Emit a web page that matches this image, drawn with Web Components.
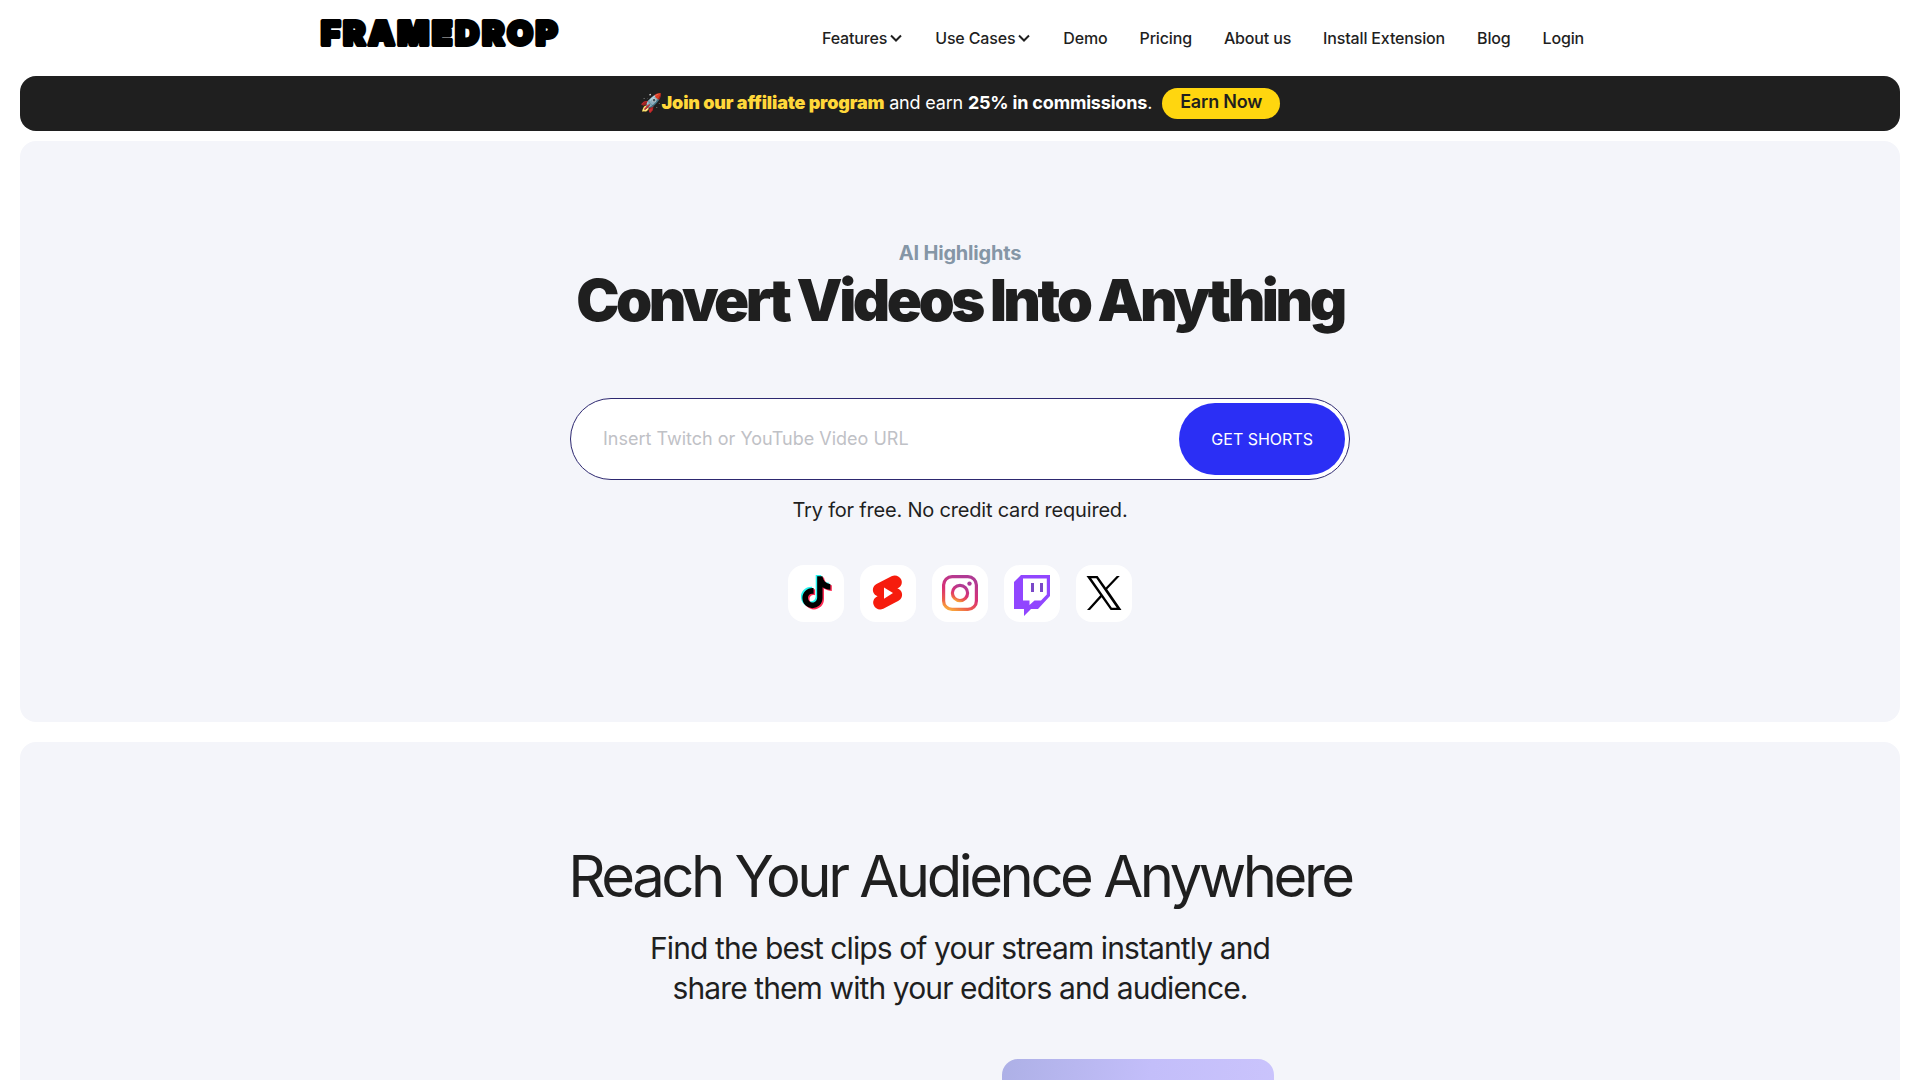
<!DOCTYPE html>
<html lang="en">
<head>
<meta charset="utf-8">
<title>Framedrop</title>
<meta name="viewport" content="width=device-width, initial-scale=1">
<style>
  body { margin: 0; background: #fff; color: #1f1f1f; font-family: Inter, "Liberation Sans", sans-serif; font-size: 16px; overflow-x: hidden; }
</style>
</head>
<body>
<fd-page></fd-page>
<script>
const define = (name, html) => {
  const template = document.createElement('template');
  template.innerHTML = html;
  customElements.define(name, class extends HTMLElement {
    constructor() {
      super();
      this.attachShadow({ mode: 'open' }).append(template.content.cloneNode(true));
    }
  });
};

define('fd-logo', `
<style>
  :host { display: block; }
  a, svg { display: block; }
  svg { overflow: visible; }
  text { font-size: 33px; font-weight: 900; letter-spacing: 3px; fill: #000; stroke: #000; stroke-width: 4px; stroke-linejoin: round; }
</style>
<a href="#"><svg width="250" height="42" viewBox="0 0 250 42"><text x="1" y="33">FRAMEDROP</text></svg></a>`);

define('fd-nav-link', `
<style>
  :host { display: block; }
  a { display: flex; align-items: center; gap: 2px; padding: 0 16px; color: inherit; text-decoration: none; font-weight: 500; line-height: 24px; letter-spacing: -.01em; }
  ::slotted(svg) { width: 14px; height: 14px; }
</style>
<a href="#"><slot></slot><slot name="icon"></slot></a>`);

define('fd-header', `
<style>
  :host { display: block; }
  header { display: flex; justify-content: space-between; align-items: center; max-width: 1280px; height: 76px; margin: 0 auto; }
  fd-logo { padding-bottom: 10px; }
  nav { display: flex; white-space: nowrap; }
  path { fill: none; stroke: #1f1f1f; stroke-width: 2; }
</style>
<header>
  <fd-logo></fd-logo>
  <nav aria-label="Main">
    <fd-nav-link>Features<svg slot="icon" viewBox="0 0 14 14"><path d="M2 4.500l5 5 5-5"/></svg></fd-nav-link>
    <fd-nav-link>Use Cases<svg slot="icon" viewBox="0 0 14 14"><path d="M2 4.500l5 5 5-5"/></svg></fd-nav-link>
    <fd-nav-link>Demo</fd-nav-link>
    <fd-nav-link>Pricing</fd-nav-link>
    <fd-nav-link>About us</fd-nav-link>
    <fd-nav-link>Install Extension</fd-nav-link>
    <fd-nav-link>Blog</fd-nav-link>
    <fd-nav-link>Login</fd-nav-link>
  </nav>
</header>`);

define('fd-banner', `
<style>
  :host { display: block; }
  aside { display: flex; align-items: center; justify-content: center; gap: 10px; height: 55px; border-radius: 16px; background: #1f1f1f; color: #fff; font-size: 18px; line-height: 27px; letter-spacing: -.01em; }
  p { margin: 0; padding-bottom: 2px; }
  b { color: #ffd83a; font-weight: 900; }
  strong { font-weight: 700; }
  a { display: block; padding: 0 18px 4px; border-radius: 16px; background: #ffd60f; color: #1f1f1f; font-weight: 600; text-decoration: none; }
</style>
<aside>
  <p>🚀<b>Join our affiliate program</b> and earn <strong>25% in commissions</strong>.</p>
  <a href="#">Earn Now</a>
</aside>`);

define('fd-url-form', `
<style>
  :host { display: block; width: 100%; max-width: 780px; }
  form { display: flex; box-sizing: border-box; height: 82px; padding: 4px; border: 1px solid #2d2870; border-radius: 41px; background: #fff; }
  input { flex: 1; min-width: 0; padding: 0 28px; border: 0; outline: 0; background: none; font: 400 18px/28px Inter, sans-serif; color: #1f1f1f; }
  input::placeholder { color: #bfc1c6; opacity: 1; }
  button { padding: 0 32px; border: 0; border-radius: 36px; background: #2b2ff5; color: #fff; font: 400 16px/24px Inter, sans-serif; }
</style>
<form onsubmit="return false">
  <input type="text" aria-label="Video URL" placeholder="Insert Twitch or YouTube Video URL">
  <button type="submit">GET SHORTS</button>
</form>`);

define('fd-tile', `
<style>
  :host { display: flex; align-items: flex-start; justify-content: center; box-sizing: border-box; width: 56px; height: 57px; padding-top: 6px; border-radius: 16px; background: #fff; }
</style>
<slot></slot>`);

const note = 'M17 2c.5 4 3 6.500 7 7v5c-2.600 0-5-.8-7-2.200V21.500c0 5-4 9-9 9s-9-4-9-9 4.200-9.300 10-8.900v5.200c-3-.7-5 .9-5 3.500s1.900 4.200 4 4.200 4.200-1.700 4.200-4.500V2z';
define('fd-socials', `
<style>
  :host { display: flex; gap: 16px; }
  svg { width: 44px; height: 44px; overflow: visible; }
</style>
<fd-tile><svg viewBox="0 0 44 44"><g transform="translate(9.500 3) scale(1.120)"><path d="${note}" transform="translate(-1.300 -1.100)" fill="#25f4ee"/><path d="${note}" transform="translate(1.300 1.100)" fill="#fe2c55"/><path d="${note}"/></g></svg></fd-tile>
<fd-tile><svg viewBox="0 0 44 44"><path d="M25.500 5.200l-15 7.900c-3 1.600-4.300 5-3.200 8.200.7 2 2.200 3.300 4.300 4l-.9.500c-3.100 1.700-4.300 5.200-3 8.300 1.600 4 6 5.500 9.600 3.600l15.200-8c3-1.600 4.300-5 3.200-8.200-.7-2-2.300-3.500-4.400-4l1-.5c3.100-1.700 4.300-5.200 3-8.300-1.600-3.800-6.100-5.400-9.800-3.500z" fill="#f61c0d"/><path d="M18 16.500v11.200l9-5.600z" fill="#fff"/></svg></fd-tile>
<fd-tile><svg viewBox="0 0 44 44"><defs><linearGradient id="ig" x1=".2" y1="1" x2=".6" y2="0"><stop offset="0" stop-color="#f9a53c"/><stop offset=".2" stop-color="#ec5a4c"/><stop offset=".5" stop-color="#d93175"/><stop offset="1" stop-color="#b03a94"/></linearGradient></defs><g fill="none" stroke="url(#ig)" stroke-width="3.200"><rect x="5.600" y="5.600" width="32.800" height="32.800" rx="8.500"/><circle cx="22" cy="22" r="7.600"/></g><circle cx="31.500" cy="12.600" r="2.200" fill="#ae3a98"/></svg></fd-tile>
<fd-tile><svg viewBox="0 0 44 44"><path d="M11 4h29v21L28 38h-7l-7 7v-7H4V11z" fill="#9146ff"/><path d="M13 7.500h23.800v16L31 29.500h-6.500L19.500 34v-4.500H13z" fill="#fff"/><path d="M21 12h3v9h-3zM30 12h3v9h-3z" fill="#7a48c8"/></svg></fd-tile>
<fd-tile><svg viewBox="0 0 44 44"><path d="M4.500 5h11.100l8.200 11.400L34.800 5h3L25.200 18.200 39.500 39H28.600l-9-12.800L8 39H5l13.200-14.700zm4.700 2.300l20.600 29.400h4.900L14.300 7.300z"/></svg></fd-tile>`);

define('fd-panel', `
<style>
  :host { display: flex; flex-direction: column; align-items: center; padding: 100px 24px; border-radius: 16px; background: #f4f5fa; text-align: center; }
</style>
<slot></slot>`);

define('fd-hero', `
<style>
  :host { display: block; }
  small { color: #8596a6; font-size: 20px; line-height: 24px; font-weight: 700; letter-spacing: -.01em; }
  h1 { margin: 0 0 63px; font-size: 58px; line-height: 70px; font-weight: 900; letter-spacing: -.06em; }
  p { margin: 16px 0 41px; font-size: 20px; line-height: 28px; letter-spacing: -.01em; }
</style>
<fd-panel>
  <small>AI Highlights</small>
  <h1>Convert Videos Into Anything</h1>
  <fd-url-form></fd-url-form>
  <p>Try for free. No credit card required.</p>
  <fd-socials></fd-socials>
</fd-panel>`);

define('fd-audience', `
<style>
  :host { display: block; }
  h2 { margin: 0 0 18px; font-size: 58px; line-height: 68px; font-weight: 400; letter-spacing: -.06em; }
  p { max-width: 660px; margin: 0 0 51px; font-size: 30px; line-height: 40px; letter-spacing: -.03em; }
  .preview { width: 100%; max-width: 916px; display: flex; justify-content: center; }
  .art { width: 272px; height: 360px; margin-left: 356px; border-radius: 16px; background: linear-gradient(100deg, #adb0e6, #c3befa 45%, #cdc6fd); }
</style>
<fd-panel>
  <h2>Reach Your Audience Anywhere</h2>
  <p>Find the best clips of your stream instantly and share them with your editors and audience.</p>
  <div class="preview"><div class="art"></div></div>
</fd-panel>`);

define('fd-page', `
<style>
  :host { display: block; }
  main { display: flex; flex-direction: column; gap: 20px; padding: 0 20px 20px; }
  fd-banner { margin: 0 20px 10px; }
</style>
<fd-header></fd-header>
<fd-banner></fd-banner>
<main>
  <fd-hero></fd-hero>
  <fd-audience></fd-audience>
</main>`);
</script>
</body>
</html>
